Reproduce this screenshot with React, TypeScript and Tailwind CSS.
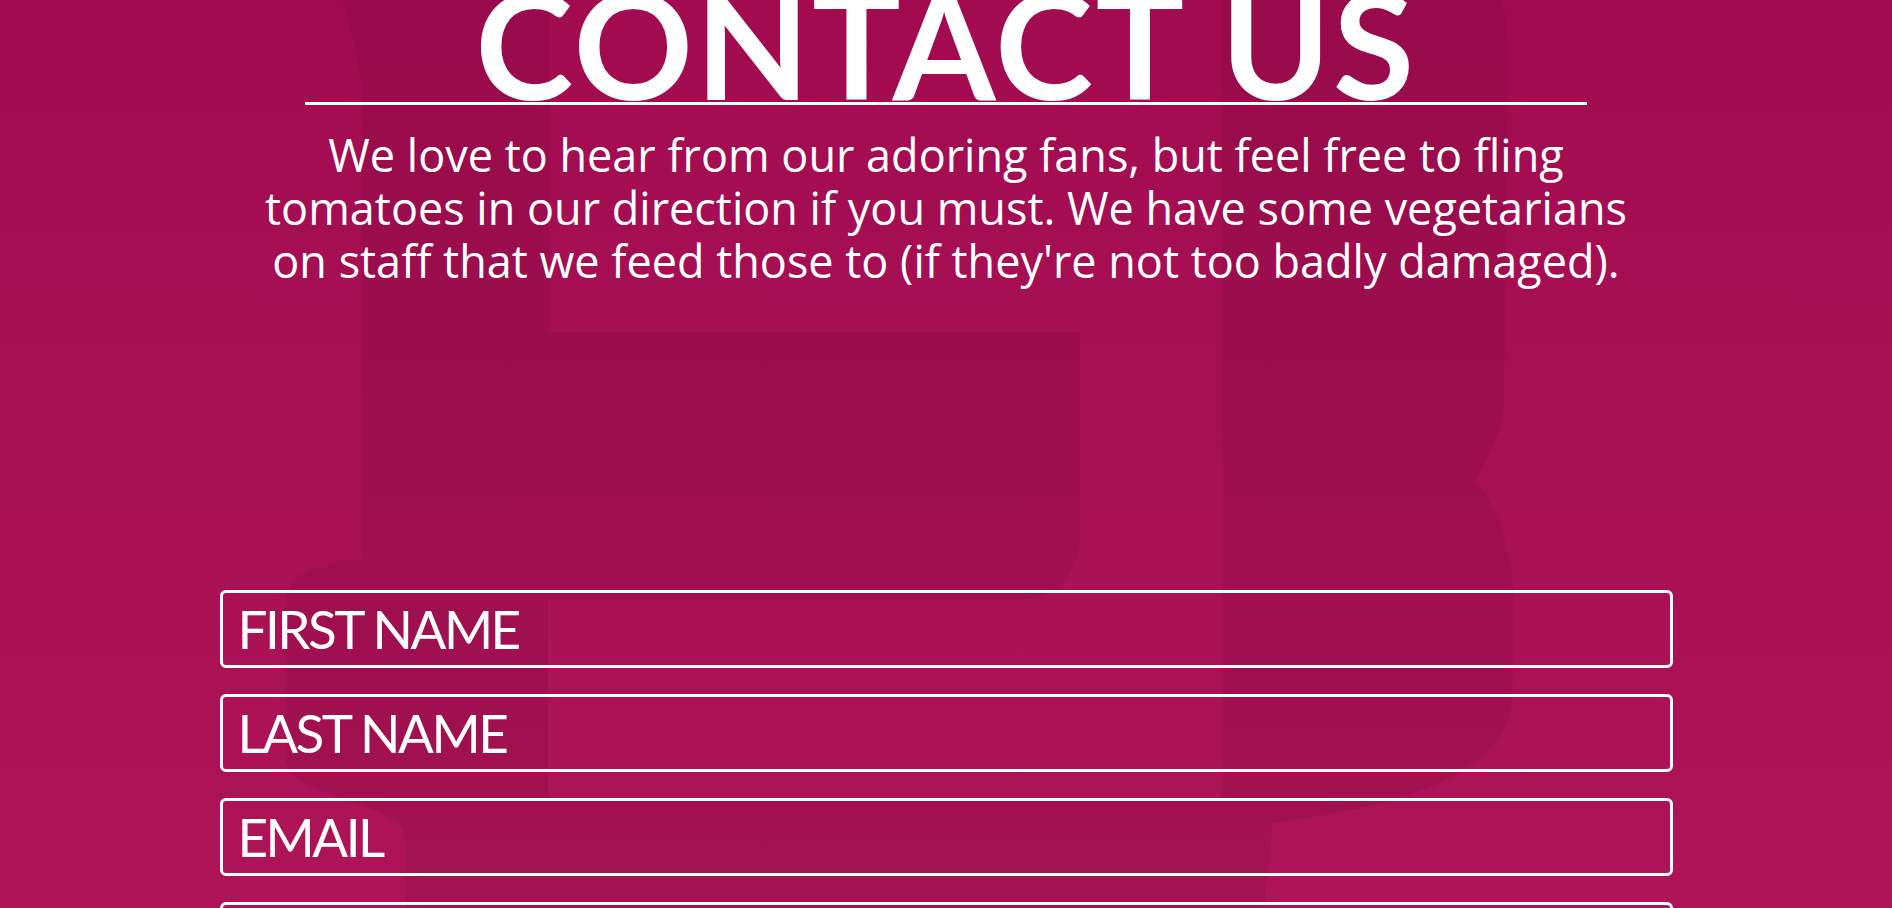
import { useState } from 'react';

const fields = ['FIRST NAME', 'LAST NAME', 'EMAIL', 'PHONE'];

const BigLetter = () => (
  <svg
    className="pointer-events-none absolute left-1/2 top-0 -translate-x-1/2"
    width="1892"
    height="1100"
    viewBox="0 0 1892 1100"
    fill="none"
  >
    <path
      fillRule="evenodd"
      fill="#000"
      fillOpacity="0.06"
      d="M320 -100 L1390 -100 C1470 -100 1508 -40 1508 60 L1504 400 C1502 440 1484 462 1476 480 C1500 510 1515 560 1515 620 L1512 700 C1508 780 1380 810 1273 823 L1243 1100 L405 1100 L405 840 C405 800 290 800 285 760 L285 610 C285 580 300 565 362 560 L362 100 C362 40 335 0 320 -100 Z M549 -100 L1222 -100 L1222 790 Q1222 800 1212 800 L558 800 Q548 800 548 790 L548 600 L1010 600 Q1080 600 1080 530 L1080 332 L549 332 Z"
    />
  </svg>
);

const App = () => {
  const [values, setValues] = useState<Record<string, string>>({});

  return (
    <div className="relative min-h-screen overflow-hidden bg-gradient-to-b from-[#a30b51] to-[#b3185a] pb-20">
      <BigLetter />
      <div className="relative flex flex-col items-center text-white">
        <h1 className="mt-[-16px] w-[1282px] border-b-[3px] border-white text-center font-['Lato',sans-serif] text-[148px] font-bold leading-[118px] tracking-[2.5px]">
          CONTACT US
        </h1>
        <p className="mt-[23px] w-[1400px] text-center font-['Open_Sans',sans-serif] text-[45px] leading-[53px]">
          We love to hear from our adoring fans, but feel free to fling
          <br />
          tomatoes in our direction if you must. We have some vegetarians
          <br />
          on staff that we feed those to (if they're not too badly damaged).
        </p>
        <form className="mt-[303px] flex w-[1453px] flex-col gap-[26px]">
          {fields.map((f) => (
            <input
              key={f}
              type="text"
              placeholder={f}
              value={values[f] ?? ''}
              onChange={(e) => setValues({ ...values, [f]: e.target.value })}
              className="h-[78px] w-full rounded-md border-[3px] border-white bg-transparent pl-[15px] pr-4 font-['Lato',sans-serif] text-[53px] tracking-[-2.5px] text-white outline-none placeholder:text-white"
            />
          ))}
          <textarea
            placeholder="MESSAGE"
            className="h-[240px] w-full rounded-md border-[3px] border-white bg-transparent pl-[15px] pr-4 font-['Lato',sans-serif] text-[53px] tracking-[-2.5px] text-white outline-none placeholder:text-white"
          />
        </form>
      </div>
    </div>
  );
};

export default App;
